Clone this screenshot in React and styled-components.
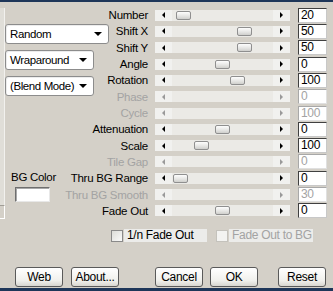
import styled, { createGlobalStyle } from 'styled-components';

const GlobalStyle = createGlobalStyle`
  body {
    margin: 0;
    background: #d4d0c8;
    font-family: "Liberation Sans", Arial, sans-serif;
  }
`;

const rows = [
  { label: 'Number', value: '20', thumb: 4 },
  { label: 'Shift X', value: '50', thumb: 65 },
  { label: 'Shift Y', value: '50', thumb: 65 },
  { label: 'Angle', value: '0', thumb: 43 },
  { label: 'Rotation', value: '100', thumb: 58 },
  { label: 'Phase', value: '0', disabled: true },
  { label: 'Cycle', value: '100', disabled: true },
  { label: 'Attenuation', value: '0', thumb: 43 },
  { label: 'Scale', value: '100', thumb: 22 },
  { label: 'Tile Gap', value: '0', disabled: true },
  { label: 'Thru BG Range', value: '0', thumb: 1 },
  { label: 'Thru BG Smooth', value: '30', disabled: true },
  { label: 'Fade Out', value: '0', thumb: 43 }
];

const App = () => {
  return (
    <Window>
      <GlobalStyle />
      <Main>
        <Edge>
          <EdgeStrip />
          <EdgeBox />
        </Edge>
        <LeftCol>
          <Select $width={104} $top={17}>
            Random
            <DownArrow />
          </Select>
          <Select $width={89} $top={6}>
            Wraparound
            <DownArrow />
          </Select>
          <Select $width={89} $top={6}>
            (Blend Mode)
            <DownArrow />
          </Select>
          <ColorGroup>
            <ColorLabel>BG Color</ColorLabel>
            <ColorSwatch />
          </ColorGroup>
        </LeftCol>
        <Rows>
          {rows.map((row) => (
            <Row key={row.label}>
              <Label $disabled={row.disabled}>
                <span>{row.label}</span>
              </Label>
              <Slider>
                <ArrowCap>
                  <LeftArrow $disabled={row.disabled} />
                </ArrowCap>
                <Channel>{!row.disabled && <Thumb $offset={row.thumb} />}</Channel>
                <ArrowCap>
                  <RightArrow $disabled={row.disabled} />
                </ArrowCap>
              </Slider>
              <ValueBox $disabled={row.disabled}>{row.value}</ValueBox>
            </Row>
          ))}
        </Rows>
      </Main>
      <CheckRow>
        <CheckItem>
          <CheckBox />
          <CheckLabel $width={83}>1/n Fade Out</CheckLabel>
        </CheckItem>
        <CheckItem $gap={9}>
          <CheckBox $disabled />
          <CheckLabel $width={84} $disabled>
            Fade Out to BG
          </CheckLabel>
        </CheckItem>
      </CheckRow>
      <ButtonRow>
        <Button>Web</Button>
        <Button $gap={8}>About...</Button>
        <Button $gap={36}>Cancel</Button>
        <Button $gap={7}>OK</Button>
        <Button $gap={20}>Reset</Button>
      </ButtonRow>
    </Window>
  );
};

const Window = styled.div`
  width: 333px;
  height: 291px;
  box-sizing: border-box;
  background: #d4d0c8;
  border-top: 2px solid #1e3659;
  border-bottom: 3px solid #1e3659;
  display: flex;
  flex-direction: column;
  font-size: 11px;
  letter-spacing: -0.2px;
  color: #000;
`;

const Main = styled.div`
  display: flex;
  height: 217px;
  padding-top: 5px;
  box-sizing: border-box;
`;

const Edge = styled.div`
  width: 5px;
  display: flex;
  flex-direction: column;
  padding-top: 1px;
`;

const EdgeStrip = styled.div`
  height: 204px;
  background: #e0ded8;
  border-right: 1px solid #f2f1ee;
  box-sizing: border-box;
`;

const EdgeBox = styled.div`
  height: 14px;
  border-top: 1px solid #a09d96;
  border-right: 1px solid #fff;
  border-bottom: 1px solid #fff;
  box-sizing: border-box;
`;

const LeftCol = styled.div`
  width: 104px;
  display: flex;
  flex-direction: column;
  align-items: flex-start;
`;

const Select = styled.div`
  width: ${(p) => p.$width}px;
  height: 20px;
  margin-top: ${(p) => p.$top}px;
  box-sizing: border-box;
  border: 1px solid #8c8c8c;
  border-radius: 3px;
  background: #fff;
  box-shadow: inset 1px 1px 0 #ececec;
  display: flex;
  align-items: center;
  justify-content: space-between;
  padding: 0 6px 0 4px;
  font-size: 11.5px;
  letter-spacing: -0.4px;
  white-space: nowrap;
`;

const DownArrow = styled.span`
  flex: none;
  width: 0;
  height: 0;
  border-left: 4px solid transparent;
  border-right: 4px solid transparent;
  border-top: 4px solid #000;
`;

const ColorGroup = styled.div`
  width: 54px;
  margin-top: 75px;
  display: flex;
  flex-direction: column;
  align-items: center;
`;

const ColorLabel = styled.div`
  height: 12px;
  line-height: 12px;
  font-size: 11.5px;
  letter-spacing: -0.3px;
  padding-left: 3px;
`;

const ColorSwatch = styled.div`
  width: 35px;
  height: 15px;
  margin-top: 4px;
  box-sizing: border-box;
  background: #fff;
  border: 1px solid;
  border-color: #6e6e6e #e8e8e8 #e8e8e8 #6e6e6e;
  box-shadow: inset 1px 1px 0 #a8a8a8;
`;

const Rows = styled.div`
  flex: 1;
  display: flex;
  flex-direction: column;
`;

const Row = styled.div`
  height: 16.33px;
  display: flex;
  align-items: center;
`;

const Label = styled.div`
  width: 39px;
  display: flex;
  justify-content: flex-end;
  white-space: nowrap;
  font-size: 11.5px;
  letter-spacing: -0.25px;
  color: ${(p) => (p.$disabled ? '#a3a3a3' : '#000')};
`;

const Slider = styled.div`
  width: 135px;
  height: 11px;
  margin-left: 7px;
  display: flex;
  background: #ebeae6;
`;

const ArrowCap = styled.div`
  width: 17px;
  display: flex;
  align-items: center;
  justify-content: center;
  background: #f1f1ef;
`;

const LeftArrow = styled.span`
  width: 0;
  height: 0;
  border-top: 3px solid transparent;
  border-bottom: 3px solid transparent;
  border-right: 3px solid ${(p) => (p.$disabled ? '#9a9a9a' : '#000')};
`;

const RightArrow = styled.span`
  width: 0;
  height: 0;
  border-top: 3px solid transparent;
  border-bottom: 3px solid transparent;
  border-left: 3px solid ${(p) => (p.$disabled ? '#9a9a9a' : '#000')};
`;

const Channel = styled.div`
  flex: 1;
  display: flex;
  align-items: center;
`;

const Thumb = styled.div`
  width: 15px;
  height: 9px;
  margin-left: ${(p) => p.$offset}px;
  box-sizing: border-box;
  border: 1px solid #8f8f8f;
  border-radius: 2px;
  background: linear-gradient(#fdfdfd, #e4e4e2 60%, #cfcfcc);
`;

const ValueBox = styled.div`
  width: 29px;
  height: 15px;
  margin-left: 8px;
  box-sizing: border-box;
  background: #fff;
  border: 1px solid;
  border-color: ${(p) =>
    p.$disabled ? '#a8a8a8 #e0e0e0 #e0e0e0 #a8a8a8' : '#404040 #c8c8c8 #c8c8c8 #404040'};
  padding-left: 2px;
  font-size: 12px;
  line-height: 13px;
  letter-spacing: -0.3px;
  color: ${(p) => (p.$disabled ? '#a3a3a3' : '#000')};
`;

const CheckRow = styled.div`
  display: flex;
  height: 13px;
  margin-top: 10px;
  padding-left: 111px;
`;

const CheckItem = styled.div`
  display: flex;
  align-items: center;
  margin-left: ${(p) => p.$gap || 0}px;
`;

const CheckBox = styled.div`
  width: 12px;
  height: 12px;
  box-sizing: border-box;
  border: 1px solid ${(p) => (p.$disabled ? '#c4c2bc' : '#8a8a8a')};
  background: ${(p) =>
    p.$disabled ? '#f3f3f1' : 'linear-gradient(135deg, #dcdcd8, #fafafa)'};
`;

const CheckLabel = styled.div`
  width: ${(p) => p.$width}px;
  height: 13px;
  line-height: 13px;
  margin-left: 1px;
  padding-left: 3px;
  box-sizing: border-box;
  background: #ececea;
  font-size: 12px;
  letter-spacing: -0.3px;
  color: ${(p) => (p.$disabled ? '#a3a3a3' : '#000')};
`;

const ButtonRow = styled.div`
  display: flex;
  margin-top: 25px;
  padding-left: 15px;
`;

const Button = styled.div`
  width: 48px;
  height: 20px;
  margin-left: ${(p) => p.$gap || 0}px;
  box-sizing: border-box;
  border: 1px solid #5a5a5a;
  border-radius: 3px;
  background: linear-gradient(#ffffff, #f0f0ec 70%, #d8d6d0);
  display: flex;
  align-items: center;
  justify-content: center;
  font-size: 12px;
  letter-spacing: -0.3px;
`;

export default App;
